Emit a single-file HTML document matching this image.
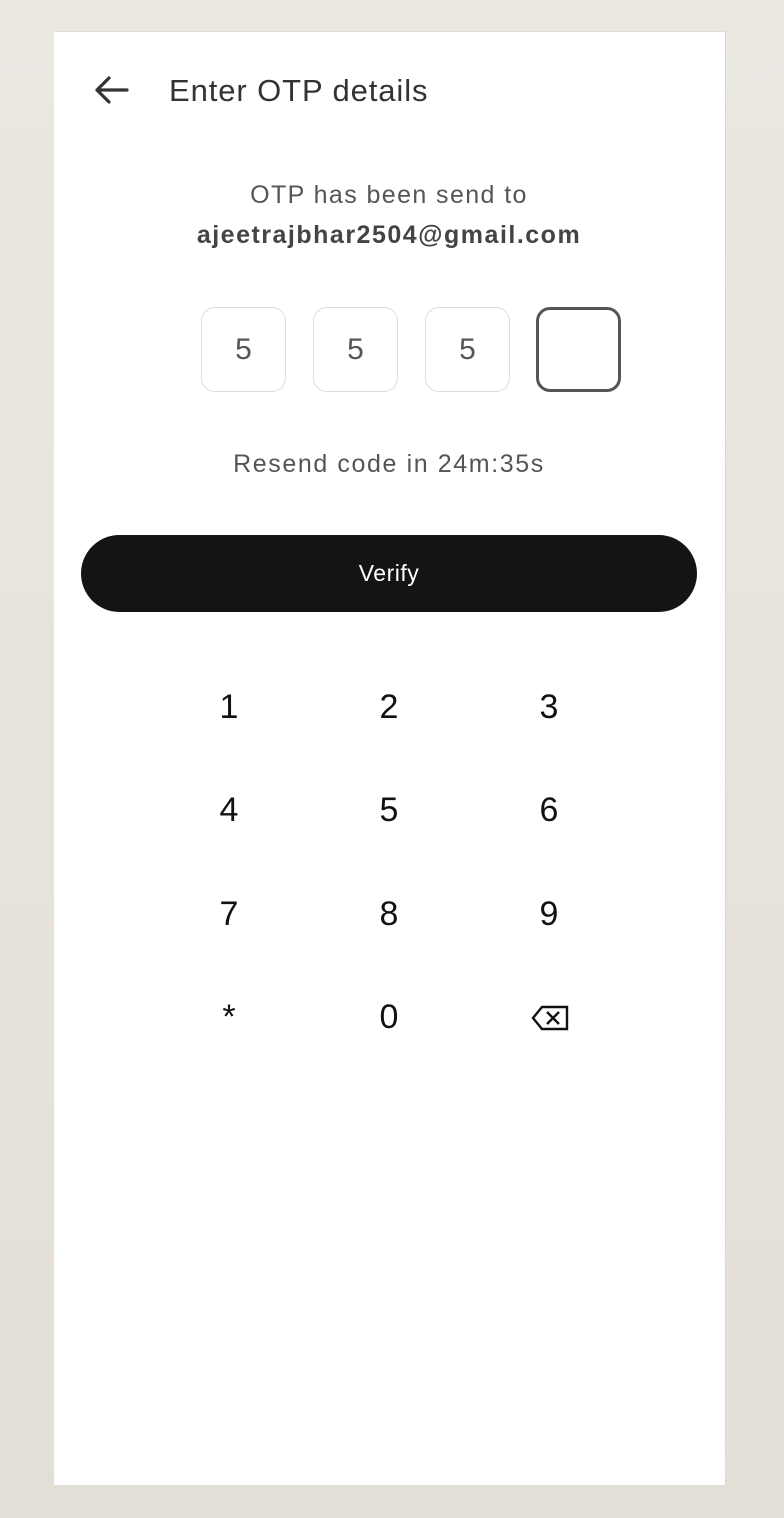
<!DOCTYPE html>
<html><head><style>
html,body{margin:0;padding:0;}
body{width:784px;height:1518px;background:linear-gradient(#ebe8e2,#e2dfd7);font-family:"Liberation Sans",sans-serif;position:relative;overflow:hidden;}
.card{position:absolute;left:54px;top:31px;width:671px;height:1453px;background:#fff;border-right:1px solid #d8d8d8;border-top:1px solid #e0ddd8;}
.t{position:absolute;white-space:nowrap;}
.box{position:absolute;top:307px;width:85px;height:85px;border:1.5px solid #dcdcdc;border-radius:14px;box-sizing:border-box;text-align:center;line-height:84px;font-size:30px;color:#555;}
.key{position:absolute;width:80px;text-align:center;font-size:34px;color:#111;}
</style></head><body>
<div class="card"></div>
<svg style="position:absolute;left:92px;top:74px" width="38" height="32" viewBox="0 0 38 32"><path d="M35 16H5M17 4L5 16L17 28" fill="none" stroke="#333" stroke-width="3.2" stroke-linecap="round" stroke-linejoin="round"/></svg>
<div class="t" style="left:169px;top:73px;font-size:31px;color:#333;letter-spacing:0.9px">Enter OTP details</div>
<div class="t" style="left:0;width:778px;text-align:center;top:181px;font-size:25px;color:#555;letter-spacing:1.4px">OTP has been send to</div>
<div class="t" style="left:0;width:778px;text-align:center;top:221px;font-size:25px;font-weight:bold;color:#444;letter-spacing:1.5px">ajeetrajbhar2504@gmail.com</div>
<div class="box" style="left:201px">5</div>
<div class="box" style="left:313px">5</div>
<div class="box" style="left:425px">5</div>
<div class="box" style="left:536px;border:3px solid #555"></div>
<div class="t" style="left:0;width:778px;text-align:center;top:450px;font-size:25px;color:#555;letter-spacing:1.6px">Resend code in 24m:35s</div>
<div style="position:absolute;left:81px;top:535px;width:616px;height:77px;background:#141414;border-radius:39px;color:#fff;text-align:center;line-height:77px;font-size:23px;letter-spacing:0.5px">Verify</div>
<div class="key" style="left:189px;top:688px">1</div><div class="key" style="left:349px;top:688px">2</div><div class="key" style="left:509px;top:688px">3</div>
<div class="key" style="left:189px;top:791px">4</div><div class="key" style="left:349px;top:791px">5</div><div class="key" style="left:509px;top:791px">6</div>
<div class="key" style="left:189px;top:895px">7</div><div class="key" style="left:349px;top:895px">8</div><div class="key" style="left:509px;top:895px">9</div>
<div class="key" style="left:189px;top:998px">*</div><div class="key" style="left:349px;top:998px">0</div>
<svg style="position:absolute;left:531px;top:1005px" width="38" height="26" viewBox="0 0 38 26"><path d="M11 2H36V24H11L2 13Z" fill="none" stroke="#111" stroke-width="2.4" stroke-linejoin="miter"/><path d="M16 7L28 19M28 7L16 19" stroke="#111" stroke-width="2.4"/></svg>
</body></html>
